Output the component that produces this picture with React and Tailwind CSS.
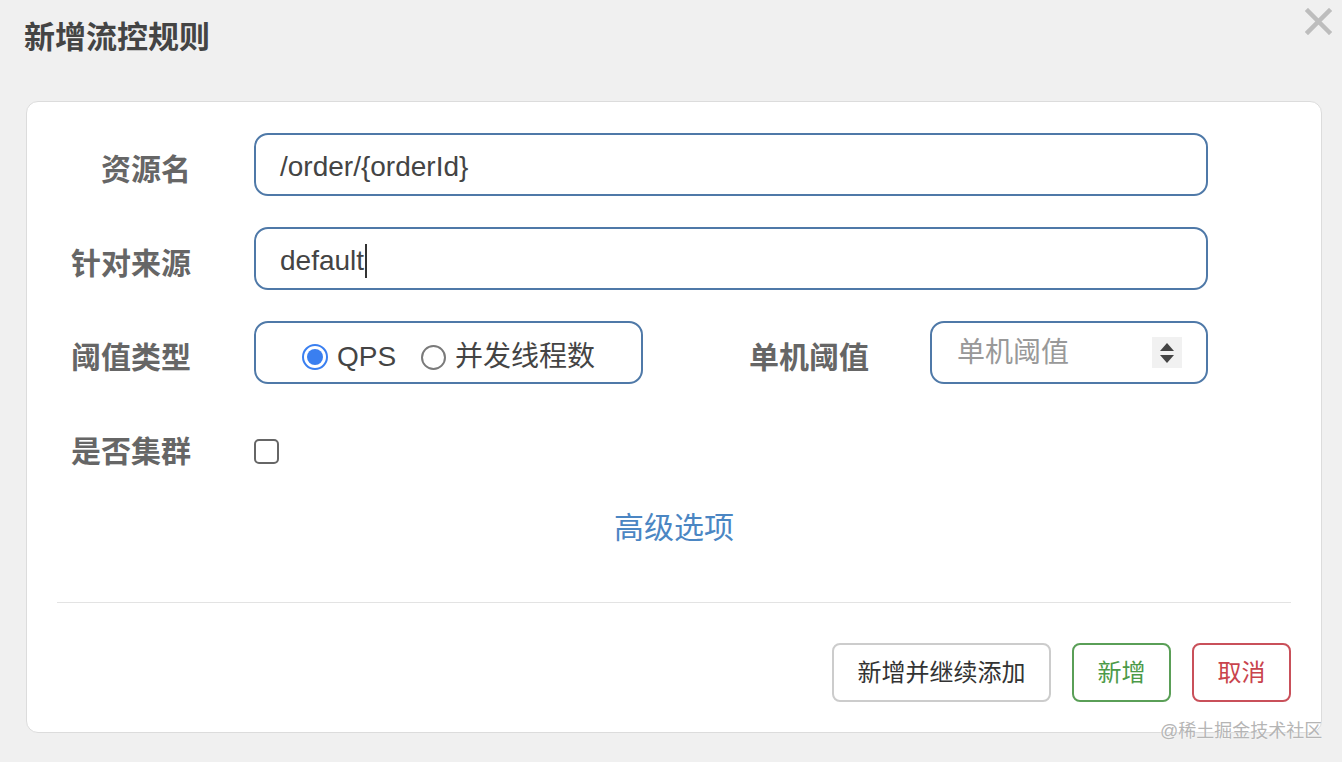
import React from 'react';

const cjk = { fontFamily: '"Liberation Sans", "Noto Sans CJK SC", sans-serif' };

function Label({ children, className = '' }) {
  return (
    <div className={`w-[121px] shrink-0 text-right text-[30px] leading-[40px] font-bold text-[#666] ${className}`}>
      {children}
    </div>
  );
}

function Radio({ checked, children }) {
  return (
    <label className="flex items-center gap-[9px]">
      {checked ? (
        <span className="w-[26px] h-[26px] rounded-full border-[2px] border-[#3a7ff0] flex items-center justify-center">
          <span className="w-[16px] h-[16px] rounded-full bg-[#3a7ff0]" />
        </span>
      ) : (
        <span className="w-[25px] h-[25px] rounded-full border-[2px] border-[#7a7a7a] bg-white" />
      )}
      <span className="text-[28px] leading-[36px] text-[#444]">{children}</span>
    </label>
  );
}

export default function App() {
  return (
    <div className="relative w-[1342px] h-[762px] bg-[#f0f0f0] overflow-hidden" style={cjk}>
      {/* Header */}
      <div className="flex justify-between items-start h-[101px]">
        <h1 className="pl-[24px] pt-[18px] text-[31px] leading-[40px] font-bold text-[#444]">新增流控规则</h1>
        <svg className="mt-[8px] mr-[10px]" width="27" height="27" viewBox="0 0 27 27">
          <path d="M3 3 L24 24 M24 3 L3 24" stroke="#bdbdbd" strokeWidth="4.5" strokeLinecap="square" />
        </svg>
      </div>

      {/* Card */}
      <div className="ml-[26px] w-[1296px] h-[632px] bg-white border border-[#dcdcdc] rounded-[12px] px-[30px] pt-[31px] pb-[30px] flex flex-col">
        <div className="pl-[13px] pr-[83px] flex flex-col gap-[31px]">
          <div className="flex items-center h-[63px]">
            <Label className="mt-[10px]">资源名</Label>
            <div className="ml-[63px] flex-1 h-[63px] border-2 border-[#4f79a8] rounded-[14px] flex items-center pl-[24px] pt-[4px] text-[28px] text-[#444]">
              /order/{'{'}orderId{'}'}
            </div>
          </div>
          <div className="flex items-center h-[63px]">
            <Label className="mt-[10px]">针对来源</Label>
            <div className="ml-[63px] flex-1 h-[63px] border-2 border-[#4f79a8] rounded-[14px] flex items-center pl-[24px] pt-[4px] text-[28px] text-[#444]">
              default<span className="inline-block w-[2px] h-[34px] bg-[#333] ml-[1px]" />
            </div>
          </div>
          <div className="flex items-center h-[63px]">
            <Label className="mt-[10px]">阈值类型</Label>
            <div className="ml-[63px] w-[389px] h-[63px] border-2 border-[#4f79a8] rounded-[14px] flex items-center justify-center gap-[25px] pt-[9px]">
              <Radio checked>QPS</Radio>
              <Radio>并发线程数</Radio>
            </div>
            <Label className="ml-[105px] mt-[10px]">单机阈值</Label>
            <div className="ml-[61px] flex-1 h-[63px] border-2 border-[#4f79a8] rounded-[14px] flex items-center justify-between pl-[25px] pr-[24px]">
              <span className="text-[28px] text-[#999]">单机阈值</span>
              <span className="w-[30px] h-[31px] bg-[#f1f1f1] flex flex-col items-center justify-center gap-[4px]">
                <svg width="14" height="8" viewBox="0 0 14 8"><path d="M7 0 L14 8 L0 8 Z" fill="#444" /></svg>
                <svg width="14" height="8" viewBox="0 0 14 8"><path d="M0 0 L14 0 L7 8 Z" fill="#444" /></svg>
              </span>
            </div>
          </div>
        </div>

        <div className="pl-[13px] mt-[36px] flex items-center h-[63px]">
          <Label>是否集群</Label>
          <span className="ml-[63px] w-[25px] h-[25px] rounded-[5px] border-[2px] border-[#666] bg-white" />
        </div>

        <div className="mt-[25px] text-center text-[30px] leading-[40px] text-[#4b86c3]">高级选项</div>

        <div className="mt-[54px] h-px bg-[#e3e3e3]" />

        <div className="mt-[40px] flex justify-end gap-[21px]">
          <button className="w-[219px] h-[59px] border-2 border-[#cccccc] rounded-[8px] bg-white text-[24px] text-[#333]">
            新增并继续添加
          </button>
          <button className="w-[99px] h-[59px] border-2 border-[#5a9f57] rounded-[8px] bg-white text-[24px] text-[#4c9a48]">
            新增
          </button>
          <button className="w-[99px] h-[59px] border-2 border-[#c9505a] rounded-[8px] bg-white text-[24px] text-[#c9444d]">
            取消
          </button>
        </div>
      </div>

      {/* Watermark */}
      <div className="absolute left-[1160px] top-[718px] text-[18px] leading-[26px] text-[#b5b5b5] [text-shadow:0_0_2px_#fff]">
        @稀土掘金技术社区
      </div>
    </div>
  );
}
